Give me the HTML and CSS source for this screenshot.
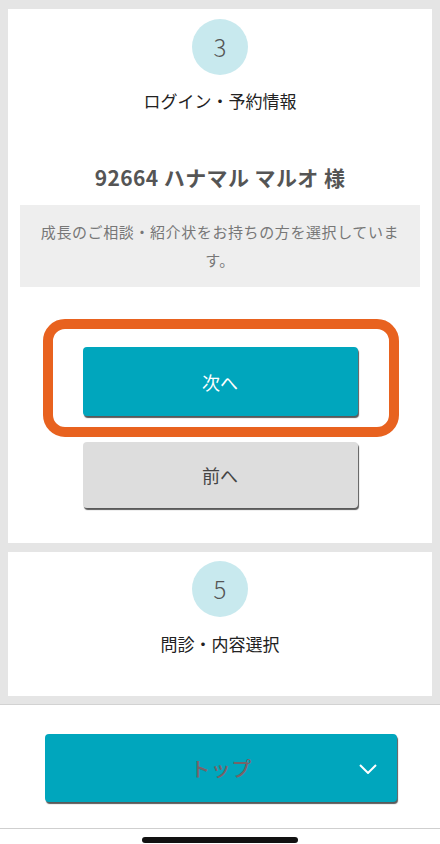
FILE: index.html
```html
<!DOCTYPE html>
<html lang="ja">
<head>
<meta charset="utf-8">
<meta name="viewport" content="width=device-width, initial-scale=1">
<link rel="stylesheet" href="styles.css">
</head>
<body>
<main class="steps">
  <section class="card card-main">
    <div class="step-num">3</div>
    <h2 class="step-title">ログイン・予約情報</h2>
    <p class="patient">92664 ハナマル マルオ 様</p>
    <div class="notice">成長のご相談・紹介状をお持ちの方を選択しています。</div>
    <div class="next-wrap">
      <button class="btn btn-next" type="button">次へ</button>
      <span class="highlight"></span>
    </div>
    <button class="btn btn-prev" type="button">前へ</button>
  </section>
  <section class="card card-next">
    <div class="step-num">5</div>
    <h2 class="step-title">問診・内容選択</h2>
  </section>
</main>
<footer class="footer">
  <button class="btn btn-top" type="button">
    <span class="top-label">トップ</span>
    <svg class="chev" width="18" height="10" viewBox="0 0 18 10"><path d="M1 1 L9 9 L17 1" fill="none" stroke="#fff" stroke-width="2"/></svg>
  </button>
</footer>
<div class="home-area"><span class="home-bar"></span></div>
</body>
</html>
```
FILE: styles.css
```css
* { box-sizing: border-box; }
html, body { margin: 0; padding: 0; }
body {
  width: 440px;
  background: #fff;
  font-family: "Noto Sans CJK JP", "Noto Sans", sans-serif;
  color: #222;
}
.steps {
  background: #e5e5e5;
  padding: 9px 8px 8px;
  display: flex;
  flex-direction: column;
  gap: 9px;
  border-bottom: 1px solid #d2d2d2;
}
.card {
  background: #fff;
  display: flex;
  flex-direction: column;
  align-items: center;
}
.card-main { height: 534px; padding: 10px 12px 0; }
.card-next { height: 144px; padding: 9px 12px 0; }
.step-num {
  width: 56px;
  height: 56px;
  border-radius: 50%;
  background: #c8e9ee;
  color: #555;
  font-size: 24px;
  font-weight: 300;
  display: flex;
  align-items: center;
  justify-content: center;
  line-height: 1;
}
.step-title {
  margin: 14px 0 0;
  font-size: 17px;
  font-weight: 400;
  line-height: 24px;
  color: #222;
}
.card-next .step-title { margin-top: 15px; }
.patient {
  margin: 50px 0 0;
  font-size: 21px;
  font-weight: 700;
  line-height: 28px;
  letter-spacing: 0.4px;
  color: #555;
}
.notice {
  margin-top: 14px;
  width: 400px;
  background: #eeeeee;
  color: #777;
  font-size: 15px;
  letter-spacing: 0.6px;
  line-height: 28px;
  padding: 13px 18px;
  text-align: center;
}
.btn {
  font-family: inherit;
  border: none;
  border-radius: 4px;
  box-shadow: 1px 2px 1px rgba(0,0,0,0.65);
  cursor: pointer;
}
.next-wrap {
  position: relative;
  margin-top: 60px;
  width: 275px;
}
.btn-next {
  display: block;
  width: 275px;
  height: 69px;
  background: #00a6bd;
  color: #fff;
  font-size: 18px;
}
.highlight {
  position: absolute;
  left: -40px;
  top: -28px;
  width: 356px;
  height: 118px;
  border: 10px solid #e8621f;
  border-radius: 22px;
  pointer-events: none;
}
.btn-prev {
  margin-top: 26px;
  width: 275px;
  height: 66px;
  background: #dddddd;
  color: #444;
  font-size: 18px;
}
.footer {
  background: #fff;
  height: 124px;
  padding-top: 29px;
  display: flex;
  justify-content: center;
  border-bottom: 1px solid #cfcfcf;
}
.btn-top {
  position: relative;
  width: 352px;
  height: 68px;
  margin-left: 2px;
  background: #00a6bd;
  display: flex;
  align-items: center;
  justify-content: center;
}
.top-label {
  color: #766368;
  font-size: 20px;
  font-weight: 500;
  letter-spacing: 0.5px;
}
.chev {
  position: absolute;
  right: 20px;
  top: 30px;
}
.home-area {
  height: 15px;
  display: flex;
  justify-content: center;
  padding-top: 8px;
}
.home-bar {
  width: 156px;
  height: 6px;
  border-radius: 3px;
  background: #111;
}
```
